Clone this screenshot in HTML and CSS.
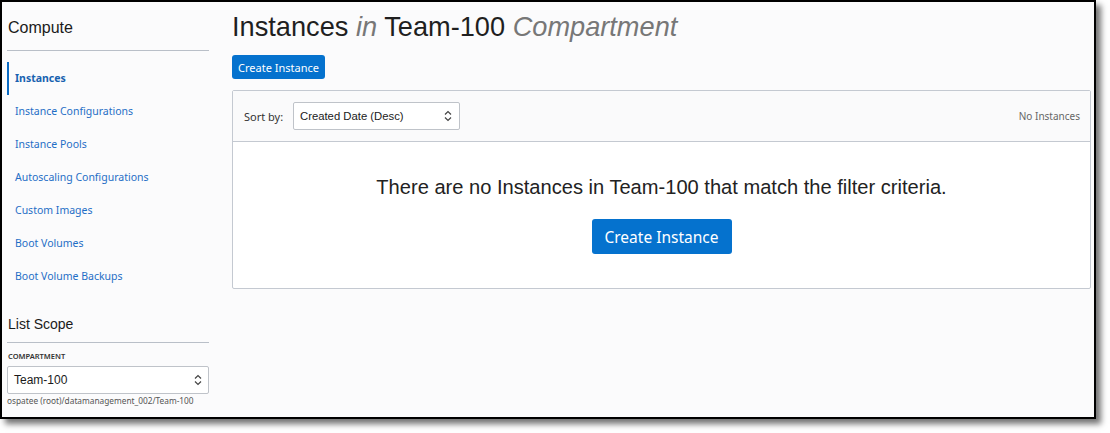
FILE: index.html
```html
<!DOCTYPE html>
<html>
<head>
<meta charset="utf-8">
<link rel="stylesheet" href="styles.css">
</head>
<body>
<div class="frame">
  <aside class="sidebar">
    <h2 class="side-title">Compute</h2>
    <nav class="nav">
      <a class="nav-item active">Instances</a>
      <a class="nav-item">Instance Configurations</a>
      <a class="nav-item">Instance Pools</a>
      <a class="nav-item">Autoscaling Configurations</a>
      <a class="nav-item">Custom Images</a>
      <a class="nav-item">Boot Volumes</a>
      <a class="nav-item">Boot Volume Backups</a>
    </nav>
    <h2 class="side-title scope">List Scope</h2>
    <div class="field-label">COMPARTMENT</div>
    <div class="select side-select"><span>Team-100</span>
      <svg class="chev" width="8" height="12" viewBox="0 0 8 12"><path d="M1 4.5 L4 1.5 L7 4.5 M1 7.5 L4 10.5 L7 7.5" fill="none" stroke="#444" stroke-width="1.2"/></svg>
    </div>
    <div class="path">ospatee (root)/datamanagement_002/Team-100</div>
  </aside>
  <main class="main">
    <h1 class="title">Instances <em>in</em> Team-100 <em>Compartment</em></h1>
    <button class="btn btn-sm">Create Instance</button>
    <section class="panel">
      <div class="panel-head">
        <label class="sort-label">Sort by:</label>
        <div class="select sort-select"><span>Created Date (Desc)</span>
          <svg class="chev" width="8" height="12" viewBox="0 0 8 12"><path d="M1 4.5 L4 1.5 L7 4.5 M1 7.5 L4 10.5 L7 7.5" fill="none" stroke="#444" stroke-width="1.2"/></svg>
        </div>
        <span class="count">No Instances</span>
      </div>
      <div class="panel-body">
        <p class="empty">There are no Instances in Team-100 that match the filter criteria.</p>
        <button class="btn btn-lg">Create Instance</button>
      </div>
    </section>
  </main>
</div>
</body>
</html>
```
FILE: styles.css
```css
html, body { margin: 0; padding: 0; background: #ffffff; }
body { width: 1110px; height: 433px; overflow: hidden; font-family: "Liberation Sans", Arial, sans-serif; }
.frame {
  box-sizing: border-box;
  width: 1096px;
  height: 419px;
  border: 2px solid #000;
  background: #fbfbfc;
  box-shadow: 5px 5px 6px rgba(0,0,0,0.55);
  display: flex;
}
.sidebar { width: 202px; padding: 0 0 0 5px; display: flex; flex-direction: column; }
.side-title {
  margin: 0;
  font-weight: normal;
  font-size: 16px;
  color: #1a1a1a;
  padding: 17px 0 0 1px;
  height: 31px;
  border-bottom: 1px solid #b9bfc8;
  line-height: 18px;
}
.side-title.scope { font-size: 14px; padding-top: 22px; height: 27px; }
.nav { display: flex; flex-direction: column; padding-top: 11px; }
.nav-item {
  font-family: "Noto Sans", "Open Sans", sans-serif;
  font-size: 10.5px;
  color: #1f6ec6;
  height: 31px;
  line-height: 29px;
  padding: 2px 0 0 6px;
  border-left: 2px solid transparent;
  white-space: nowrap;
}
.nav-item.active { border-left-color: #0a6bc4; font-weight: bold; color: #1862b0; }
.field-label {
  font-family: "Noto Sans", "Open Sans", sans-serif;
  font-size: 7.5px;
  font-weight: 600;
  color: #333;
  margin: 8px 0 0 1px;
  height: 11px;
  line-height: 11px;
}
.select {
  box-sizing: border-box;
  display: flex;
  align-items: center;
  justify-content: space-between;
  background: #fff;
  border: 1px solid #bfc3c9;
  border-radius: 2px;
  color: #1a1a1a;
}
.side-select { margin-top: 4px; height: 28px; padding: 0 6px 0 6px; font-size: 12px; width: 202px; }
.path {
  font-family: "Noto Sans", "Open Sans", sans-serif;
  font-size: 8.3px;
  color: #555;
  margin: 1px 0 0 0;
  white-space: nowrap;
}
.main { flex: 1; padding: 0 0 0 23px; display: flex; flex-direction: column; align-items: flex-start; }
.title {
  margin: 9px 0 0 0;
  font-weight: normal;
  font-size: 27.2px;
  line-height: 32px;
  color: #1f1f1f;
  white-space: nowrap;
}
.title em { color: #777; }
.btn {
  font-family: "Noto Sans", "Open Sans", sans-serif;
  background: #0572ce;
  color: #fff;
  border: none;
  border-radius: 3px;
  padding: 0;
}
.btn-sm { margin-top: 12px; width: 93px; height: 24px; font-size: 11px; }
.panel {
  box-sizing: border-box;
  margin-top: 11px;
  width: 859px;
  height: 199px;
  border: 1px solid #c4c9d1;
  border-radius: 2px;
  background: #fff;
  display: flex;
  flex-direction: column;
}
.panel-head {
  box-sizing: border-box;
  height: 51px;
  background: #fafafb;
  border-bottom: 1px solid #c4c9d1;
  display: flex;
  align-items: center;
  padding: 0 10px 0 11px;
}
.sort-label { font-size: 11px; color: #333; font-family: "Noto Sans", "Open Sans", sans-serif; width: 49px; }
.sort-select { width: 167px; height: 28px; padding: 0 7px 0 6px; font-size: 11.3px; }
.count { margin-left: auto; font-family: "Noto Sans", "Open Sans", sans-serif; font-size: 10px; color: #666; }
.panel-body { flex: 1; display: flex; flex-direction: column; align-items: center; }
.empty { margin: 33px 0 0 0; font-size: 20.1px; line-height: 24px; color: #222; white-space: nowrap; }
.btn-lg { margin-top: 20px; width: 140px; height: 35px; font-size: 15.5px; }
```
